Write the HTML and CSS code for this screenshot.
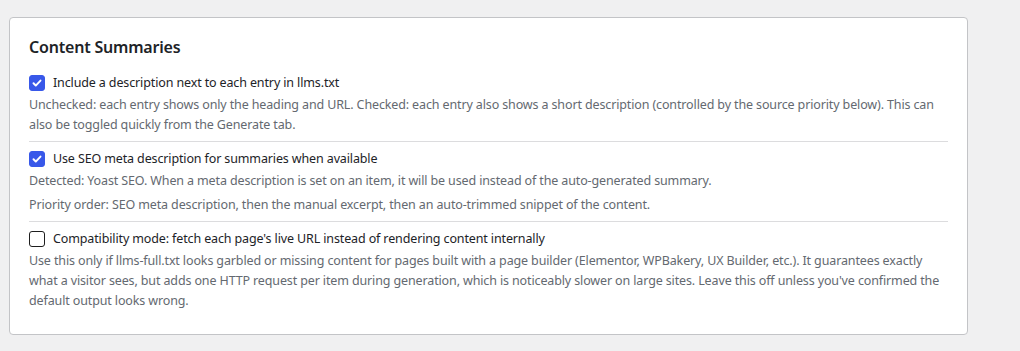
FILE: index.html
```html
<!DOCTYPE html>
<html lang="en">
<head>
    <meta charset="UTF-8">
    <title>Content Summaries</title>
    <link rel="stylesheet" href="styles.css">
</head>
<body>
<div class="settings-card">
    <h2 class="card-title">Content Summaries</h2>

    <div class="option">
        <label class="option-label">
            <span class="check is-checked">
                <svg viewBox="0 0 16 16" width="16" height="16"><path d="M4 8.3l2.6 2.6L12 5.2" fill="none" stroke="#fff" stroke-width="2.2" stroke-linecap="round" stroke-linejoin="round"/></svg>
            </span>
            Include a description next to each entry in llms.txt
        </label>
        <p class="option-desc">Unchecked: each entry shows only the heading and URL. Checked: each entry also shows a short description (controlled by the source priority below). This can also be toggled quickly from the Generate tab.</p>
    </div>

    <div class="option">
        <label class="option-label">
            <span class="check is-checked">
                <svg viewBox="0 0 16 16" width="16" height="16"><path d="M4 8.3l2.6 2.6L12 5.2" fill="none" stroke="#fff" stroke-width="2.2" stroke-linecap="round" stroke-linejoin="round"/></svg>
            </span>
            Use SEO meta description for summaries when available
        </label>
        <p class="option-desc">Detected: Yoast SEO. When a meta description is set on an item, it will be used instead of the auto-generated summary.</p>
        <p class="option-desc">Priority order: SEO meta description, then the manual excerpt, then an auto-trimmed snippet of the content.</p>
    </div>

    <div class="option">
        <label class="option-label">
            <span class="check"></span>
            Compatibility mode: fetch each page's live URL instead of rendering content internally
        </label>
        <p class="option-desc">Use this only if llms-full.txt looks garbled or missing content for pages built with a page builder (Elementor, WPBakery, UX Builder, etc.). It guarantees exactly what a visitor sees, but adds one HTTP request per item during generation, which is noticeably slower on large sites. Leave this off unless you've confirmed the default output looks wrong.</p>
    </div>
</div>
</body>
</html>
```

FILE: styles.css
```css
*, ::before, ::after {
    box-sizing: border-box;
}

* {
    margin: 0;
}

body {
    background: #f0f0f1;
    font-family: "Noto Sans", "Open Sans", sans-serif;
    font-size: 12.5px;
    letter-spacing: -0.13px;
    color: #1d2327;
    padding: 17px 0 0 9px;
}

.settings-card {
    width: 959px;
    background: #fff;
    border: 1px solid #c3c4c7;
    border-radius: 4px;
    padding: 18px 19px 17px;
}

.card-title {
    font-size: 16px;
    font-weight: 600;
    letter-spacing: -0.2px;
    line-height: 22px;
    margin-bottom: 8px;
}

.option {
    padding: 7px 0 6px;
    border-bottom: 1px solid #dcdcde;
}

.option:last-child {
    border-bottom: none;
}

.option-label {
    display: flex;
    align-items: center;
    gap: 8px;
    line-height: 20px;
}

.check {
    display: flex;
    align-items: center;
    justify-content: center;
    width: 16px;
    height: 16px;
    border: 1.5px solid #1e1e1e;
    border-radius: 3px;
    background: #fff;
    flex-shrink: 0;
}

.check.is-checked {
    background: #3858e9;
    border-color: #3858e9;
}

.option-desc {
    color: #646970;
    line-height: 20px;
    margin-top: 2px;
}

.option-desc + .option-desc {
    margin-top: 4px;
}
```
